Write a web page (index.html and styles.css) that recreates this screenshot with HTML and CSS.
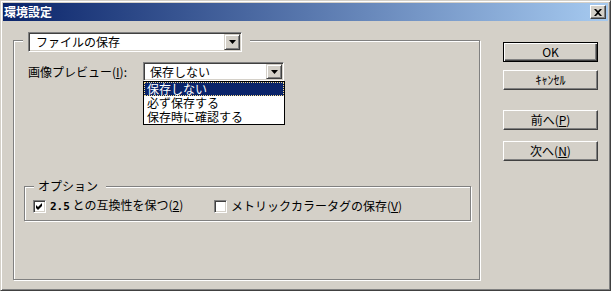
FILE: index.html
```html
<!DOCTYPE html>
<html lang="ja">
<head>
<meta charset="utf-8">
<title>環境設定</title>
<link rel="stylesheet" href="styles.css">
</head>
<body>
<div class="window">
  <div class="titlebar">
    <span class="title">環境設定</span>
    <button class="close" aria-label="閉じる">
      <svg width="8" height="7" viewBox="0 0 8 7"><path d="M0 0h2l2 2 2-2h2L5 3.5 8 7H6L4 5 2 7H0l3-3.5z" fill="#000"/></svg>
    </button>
  </div>
  <div class="content">
    <div class="group main-group">
      <div class="group-legend">
        <div class="combo wide">
          <span class="combo-text">ファイルの保存</span>
          <span class="combo-btn"><svg width="7" height="4" viewBox="0 0 7 4"><path d="M0 0h7L3.5 4z" fill="#000"/></svg></span>
        </div>
      </div>
      <div class="preview-row">
        <span class="preview-label">画像プレビュー(<u>I</u>):</span>
        <div class="combo-wrap">
          <div class="combo narrow">
            <span class="combo-text">保存しない</span>
            <span class="combo-btn"><svg width="7" height="4" viewBox="0 0 7 4"><path d="M0 0h7L3.5 4z" fill="#000"/></svg></span>
          </div>
          <ul class="dropdown">
            <li class="item selected">保存しない</li>
            <li class="item">必ず保存する</li>
            <li class="item">保存時に確認する</li>
          </ul>
        </div>
      </div>
      <div class="group options-group">
        <div class="opt-legend">オプション</div>
        <div class="check-row">
          <label class="check first">
            <span class="cb"><svg width="7" height="7" viewBox="0 0 7 7"><path d="M0 2l2 2 4-4v3L2 7 0 5z" fill="#000"/></svg></span>
            <span class="check-text"><span class="num">2.5</span> との互換性を保つ(<u>2</u>)</span>
          </label>
          <label class="check">
            <span class="cb"></span>
            <span class="check-text">メトリックカラータグの保存(<u>V</u>)</span>
          </label>
        </div>
      </div>
    </div>
    <div class="buttons">
      <button class="btn default">OK</button>
      <button class="btn cancel">ｷｬﾝｾﾙ</button>
      <button class="btn prev">前へ(<u>P</u>)</button>
      <button class="btn next">次へ(<u>N</u>)</button>
    </div>
  </div>
</div>
</body>
</html>
```
FILE: styles.css
```css
* { box-sizing: border-box; }
html, body { margin: 0; padding: 0; }
body {
  width: 611px;
  height: 291px;
  overflow: hidden;
  background: #D4D0C8;
  font-family: "Noto Sans CJK JP", sans-serif;
  font-size: 12px;
  color: #000;
}
.window {
  width: 611px;
  height: 291px;
  background: #D4D0C8;
  border: 1px solid;
  border-color: #D4D0C8 #404040 #404040 #D4D0C8;
  box-shadow: inset 1px 1px #fff, inset -1px -1px #808080;
  padding: 2px;
  display: flex;
  flex-direction: column;
}
.titlebar {
  flex: none;
  height: 18px;
  background: linear-gradient(to right, #0A246A, #A6CAF0);
  display: flex;
  align-items: center;
  justify-content: space-between;
  padding: 0 2px 0 1px;
}
.title {
  color: #fff;
  font-weight: bold;
  font-size: 12px;
  line-height: 18px;
}
.close {
  width: 16px;
  height: 14px;
  padding: 0;
  background: #D4D0C8;
  border: 1px solid;
  border-color: #fff #404040 #404040 #fff;
  box-shadow: inset -1px -1px #808080;
  display: flex;
  align-items: center;
  justify-content: center;
}
.content {
  display: flex;
  align-items: flex-start;
  padding-left: 10px;
}
.group {
  border: 1px solid #808080;
  box-shadow: inset 1px 1px #fff, 1px 1px #fff;
  display: flex;
  flex-direction: column;
  align-items: flex-start;
}
.main-group {
  width: 467px;
  height: 240px;
  margin-top: 19px;
}
.group-legend {
  margin: -9px 0 0 9px;
  padding: 0 8px 0 5px;
  background: #D4D0C8;
}
.combo {
  display: flex;
  background: #fff;
  border: 1px solid;
  border-color: #808080 #fff #fff #808080;
  box-shadow: inset 1px 1px #404040, inset -1px -1px #D4D0C8;
  padding: 1px;
}
.combo.wide { width: 214px; height: 20px; }
.combo.narrow { width: 141px; height: 19px; }
.combo-text {
  flex: 1;
  padding-left: 6px;
  line-height: 16px;
  white-space: nowrap;
  overflow: hidden;
}
.combo.narrow .combo-text { line-height: 15px; padding-left: 5px; }
.combo-btn {
  flex: none;
  width: 16px;
  background: #D4D0C8;
  border: 1px solid;
  border-color: #D4D0C8 #404040 #404040 #D4D0C8;
  box-shadow: inset 1px 1px #fff, inset -1px -1px #808080;
  display: flex;
  align-items: center;
  justify-content: center;
}
.combo-btn svg { display: block; }
.preview-row {
  display: flex;
  align-items: center;
  margin: 10px 0 0 14px;
}
.preview-label {
  width: 115px;
  white-space: nowrap;
}
.combo-wrap { position: relative; }
.dropdown {
  position: absolute;
  left: 0;
  top: 100%;
  width: 142px;
  margin: 0;
  padding: 0;
  list-style: none;
  background: #fff;
  border: 1px solid #000;
  z-index: 2;
}
.item {
  height: 14px;
  line-height: 14px;
  padding-left: 3px;
  white-space: nowrap;
}
.item.selected {
  background: #0A246A;
  color: #fff;
  outline: 1px dotted #F5DC8C;
  outline-offset: -1px;
}
.options-group {
  width: 447px;
  height: 35px;
  margin: 105px 0 0 10px;
}
.opt-legend {
  margin: -8px 0 0 9px;
  padding: 0 8px 0 4px;
  line-height: 14px;
  background: #D4D0C8;
}
.check-row {
  display: flex;
  align-items: center;
  margin: 5px 0 0 8px;
}
.check {
  display: flex;
  align-items: center;
  gap: 4px;
  white-space: nowrap;
}
.check.first { width: 181px; }
.cb {
  flex: none;
  width: 13px;
  height: 13px;
  background: #fff;
  border: 1px solid;
  border-color: #808080 #fff #fff #808080;
  box-shadow: inset 1px 1px #404040, inset -1px -1px #D4D0C8;
  display: flex;
  align-items: center;
  justify-content: center;
}
.cb svg { display: block; }
.check-text { line-height: 14px; }
.num { font-family: "DejaVu Sans Mono", monospace; font-weight: bold; font-size: 11px; }
.buttons {
  display: flex;
  flex-direction: column;
  width: 95px;
  margin: 21px 0 0 23px;
}
.btn {
  width: 95px;
  height: 20px;
  padding: 0;
  font: inherit;
  color: #000;
  line-height: 16px;
  background: #D4D0C8;
  border: 1px solid;
  border-color: #fff #404040 #404040 #fff;
  box-shadow: inset -1px -1px #808080;
  text-align: center;
}
.btn.default {
  border: 1px solid #000;
  box-shadow: inset 1px 1px #fff, inset -1px -1px #404040, inset -2px -2px #808080;
}
.btn.cancel { margin-top: 8px; }
.btn.prev { margin-top: 20px; }
.btn.next { margin-top: 11px; }
```
